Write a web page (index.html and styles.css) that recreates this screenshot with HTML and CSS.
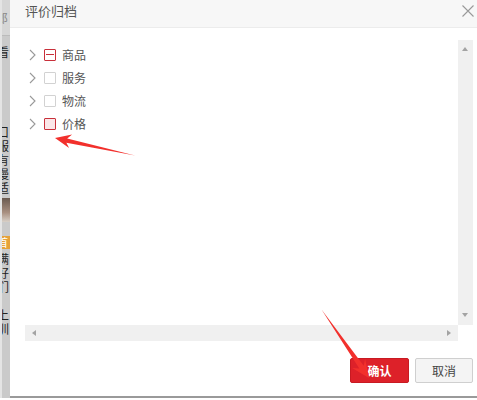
FILE: index.html
```html
<!DOCTYPE html>
<html lang="zh-CN">

<head>
    <meta charset="UTF-8">
    <meta name="viewport" content="width=device-width, initial-scale=1.0">
    <title>评价归档</title>
    <link rel="stylesheet" href="styles.css">
</head>

<body>
    <div class="page">
        <!-- 背后页面露出的一条 -->
        <div class="edge">
            <span class="edge-top">郎</span>
            <span class="g g1">看</span>
            <span class="g g2">口</span>
            <span class="g">服</span>
            <span class="g">有</span>
            <span class="g">慢</span>
            <span class="g">适</span>
            <span class="edge-pic"></span>
            <span class="edge-badge">首</span>
            <span class="g">满</span>
            <span class="g">好</span>
            <span class="g">们</span>
            <span class="g">，</span>
            <span class="g">上</span>
            <span class="g">训</span>
        </div>

        <div class="dialog">
            <div class="dialog-title">
                <span>评价归档</span>
                <svg class="close" width="12" height="12" viewBox="0 0 12 12">
                    <path d="M0.5 0.5 L11.5 11.5 M11.5 0.5 L0.5 11.5" stroke="#999" stroke-width="1.1" fill="none"/>
                </svg>
            </div>

            <div class="dialog-body">
                <div class="scroll-box">
                    <ul class="tree">
                        <li class="tree-item">
                            <svg class="chevron" width="7" height="12" viewBox="0 0 7 12"><polyline points="1,1 6,6 1,11" fill="none" stroke="#999" stroke-width="1.1"/></svg>
                            <span class="check part"></span>
                            <span class="label">商品</span>
                        </li>
                        <li class="tree-item">
                            <svg class="chevron" width="7" height="12" viewBox="0 0 7 12"><polyline points="1,1 6,6 1,11" fill="none" stroke="#999" stroke-width="1.1"/></svg>
                            <span class="check"></span>
                            <span class="label">服务</span>
                        </li>
                        <li class="tree-item">
                            <svg class="chevron" width="7" height="12" viewBox="0 0 7 12"><polyline points="1,1 6,6 1,11" fill="none" stroke="#999" stroke-width="1.1"/></svg>
                            <span class="check"></span>
                            <span class="label">物流</span>
                        </li>
                        <li class="tree-item">
                            <svg class="chevron" width="7" height="12" viewBox="0 0 7 12"><polyline points="1,1 6,6 1,11" fill="none" stroke="#999" stroke-width="1.1"/></svg>
                            <span class="check hover"></span>
                            <span class="label">价格</span>
                        </li>
                    </ul>
                    <div class="vbar">
                        <span class="tri tri-up"></span>
                        <span class="tri tri-down"></span>
                    </div>
                    <div class="hbar">
                        <span class="tri tri-left"></span>
                        <span class="tri tri-right"></span>
                    </div>
                    <div class="corner"></div>
                </div>

                <div class="actions">
                    <button class="btn btn-ok">确认</button>
                    <button class="btn btn-cancel">取消</button>
                </div>
            </div>
        </div>

        <!-- 截图上画的红色箭头 -->
        <svg class="marks" width="477" height="400" viewBox="0 0 477 400">
            <polygon points="55,138 72.1,134.5 67.2,138.4 135,155.5 66.4,142.8 69.1,148.1" fill="#f2302c"/>
            <polygon points="369,378 352.1,367.9 359.3,368.6 321.5,309.5 363.7,365.8 365.1,358.7" fill="#f2302c"/>
        </svg>
    </div>
</body>

</html>
```

FILE: styles.css
```css
* {
    box-sizing: border-box;
}

body {
    margin: 0;
    background: #fff;
    font-family: "Microsoft YaHei", "Noto Sans CJK SC", sans-serif;
}

ul {
    margin: 0;
    padding: 0;
    list-style: none;
}

.page {
    position: relative;
    width: 477px;
    height: 400px;
    display: flex;
    overflow: hidden;
}

/* 左侧露出的背景页面 */
.edge {
    width: 10px;
    height: 398px;
    background: #cacaca;
    border-left: 2px solid #e4e4e4;
    display: flex;
    flex-direction: column;
    overflow: hidden;
    font-size: 12px;
    line-height: 14px;
    color: #222;
}

.edge span {
    flex: none;
    height: 14px;
    overflow: hidden;
}

.edge .edge-top {
    height: 36px;
    padding-top: 11px;
    margin-left: -6px;
    background: #d6d6d6;
    color: #888;
    border-bottom: 1px solid #bbb;
}

.g {
    margin-left: -5px;
}

.g1 {
    margin-top: 9px;
}

.g2 {
    margin-top: 66px;
}

.edge .edge-pic {
    height: 24px;
    margin: 3px 0 14px;
    background: linear-gradient(#6a5a50, #a88f80 60%, #d8d0c8);
}

.edge .edge-badge {
    height: 13px;
    margin-left: -5px;
    margin-bottom: 3px;
    background: #e6a23a;
    color: #fff;
    font-size: 11px;
    line-height: 13px;
}

.dialog {
    flex: 1;
    height: 398px;
    background: #fff;
    border-bottom: 2px solid #9a9a9a;
}

.dialog-title {
    height: 28px;
    padding: 0 3px 0 15px;
    background: #f7f7f7;
    border-bottom: 1px solid #ececec;
    display: flex;
    justify-content: space-between;
    align-items: flex-start;
    font-size: 13px;
    line-height: 21px;
    color: #555;
}

.close {
    margin-top: 5px;
}

.dialog-body {
    padding: 12px 4px 0 15px;
}

/* 树形列表 + 自绘滚动条 */
.scroll-box {
    height: 301px;
    display: grid;
    grid-template-columns: 1fr 15px;
    grid-template-rows: 1fr 16px;
}

.tree {
    padding: 3px 0 0 4px;
}

.tree-item {
    height: 23px;
    display: flex;
    align-items: center;
    font-size: 12px;
    color: #555;
}

.chevron {
    margin-right: 8px;
}

.check {
    width: 12px;
    height: 12px;
    margin-right: 6px;
    border: 1px solid #d2d2d2;
    border-radius: 1px;
    background: #fff;
    position: relative;
}

.check.part {
    border-color: #c8303a;
}

.check.part::after {
    content: "";
    position: absolute;
    left: 1px;
    right: 1px;
    top: 4px;
    height: 1px;
    background: #c8303a;
}

.check.hover {
    border-color: #c8303a;
    background: #fbe6e8;
}

.vbar,
.hbar {
    background: #f0f0f0;
    position: relative;
}

.corner {
    background: #fff;
}

.tri {
    position: absolute;
    width: 0;
    height: 0;
    border: 3px solid transparent;
}

.tri-up {
    left: 4px;
    top: 4px;
    border-bottom: 4px solid #a3a3a3;
}

.tri-down {
    left: 4px;
    bottom: 5px;
    border-top: 4px solid #a3a3a3;
}

.tri-left {
    left: 4px;
    top: 5px;
    border-right: 4px solid #a3a3a3;
}

.tri-right {
    right: 4px;
    top: 5px;
    border-left: 4px solid #a3a3a3;
}

.actions {
    margin-top: 17px;
    display: flex;
    justify-content: flex-end;
    gap: 6px;
}

.btn {
    height: 25px;
    border-radius: 2px;
    font-family: inherit;
    font-size: 12px;
    cursor: pointer;
    padding: 0;
}

.btn-ok {
    width: 59px;
    background: #dd2129;
    border: 1px solid #c81a22;
    color: #fff;
    font-weight: bold;
}

.btn-cancel {
    width: 58px;
    background: #f4f4f4;
    border: 1px solid #cfcfcf;
    color: #444;
}

.marks {
    position: absolute;
    left: 0;
    top: 0;
    pointer-events: none;
}
```
